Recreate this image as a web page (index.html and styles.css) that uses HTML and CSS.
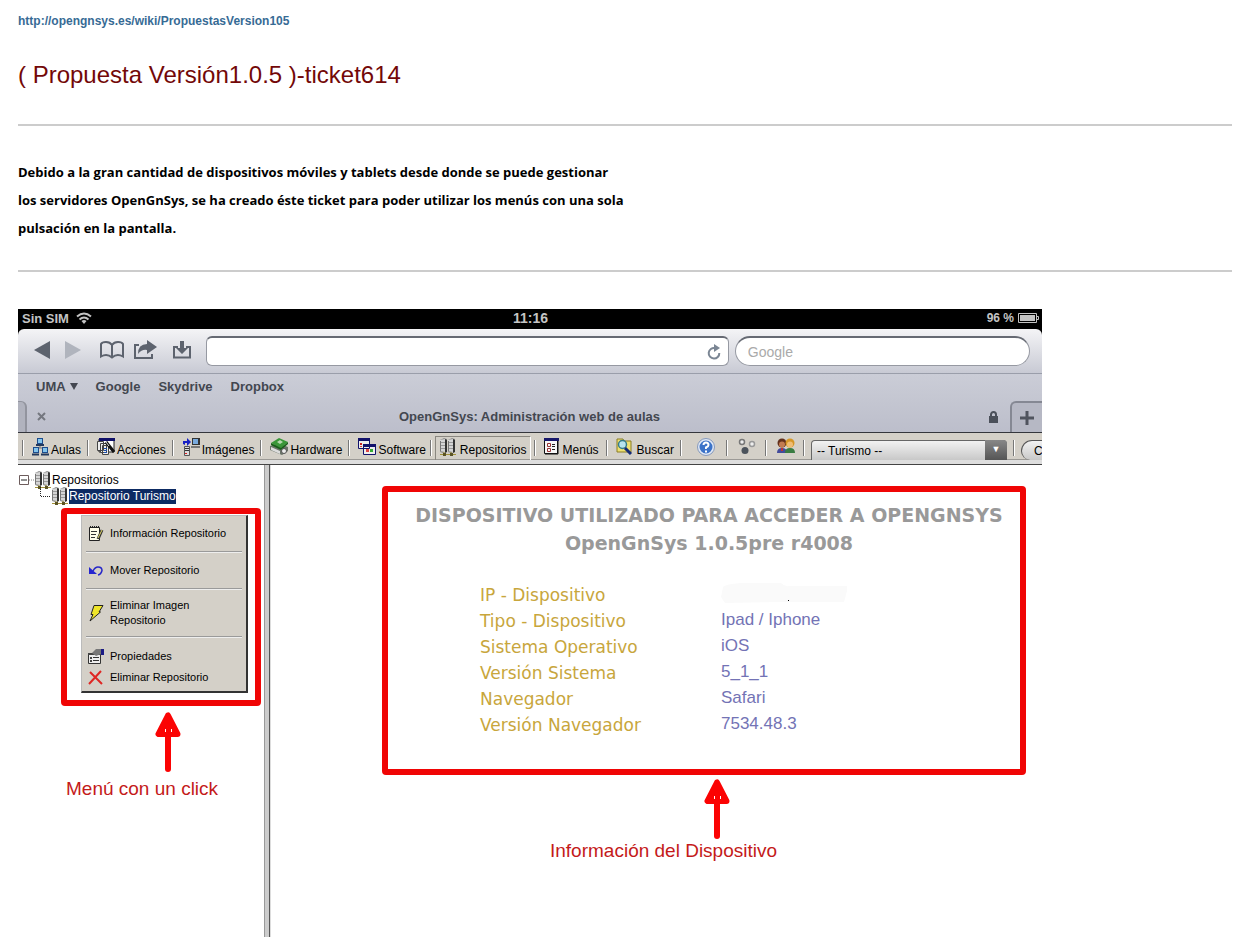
FILE: index.html
```
<!DOCTYPE html>
<html lang="es">
<head>
<meta charset="utf-8">
<title>Propuesta Versión1.0.5 - ticket614</title>
<link rel="stylesheet" href="styles.css">
</head>
<body>
<svg width="0" height="0" class="defs" aria-hidden="true">
  <defs>
    <symbol id="servers" viewBox="0 0 18 18">
      <path d="M1 2l4-2 3 1v12l-4 2-3-1z" fill="#8d8d8d"/><path d="M1 2l5-1v13l-5-1z" fill="#d5d5d5"/><path d="M6 1l2 1v12l-2 1z" fill="#333"/>
      <path d="M9 2l4-2 3 1v12l-4 2-3-1z" fill="#8d8d8d"/><path d="M9 2l5-1v13l-5-1z" fill="#d5d5d5"/><path d="M14 1l2 1v12l-2 1z" fill="#333"/>
      <path d="M1.500 3v10M9.500 3v10" stroke="#777"/><path d="M2 4.500h4M2 7.500h4M2 10.500h4M10 4.500h4M10 7.500h4M10 10.500h4" stroke="#999"/>
      <path d="M1 16.500h16M5 14v3M12 14v3" stroke="#a2923a"/><path d="M4 15h3v3H4zM11 15h3v3h-3z" fill="#5b5426"/>
    </symbol>
    <symbol id="arrow" viewBox="0 0 26 60">
      <path d="M13 57V20" stroke="#fb0303" stroke-width="6" stroke-linecap="round"/>
      <path d="M13 3.500L3.500 22h19z" fill="#fb0303" stroke="#fb0303" stroke-width="6" stroke-linejoin="round"/>
      <path d="M10.500 17v3M16.500 17v3" stroke="#fff"/>
    </symbol>
  </defs>
</svg>
<main class="page">
  <a class="wiki-link" href="#">http://opengnsys.es/wiki/PropuestasVersion105</a>
  <h1 class="title">( Propuesta Versión1.0.5 )-ticket614</h1>
  <hr class="rule">
  <p class="intro">Debido a la gran cantidad de dispositivos móviles y tablets desde donde se puede gestionar<br>los servidores OpenGnSys, se ha creado éste ticket para poder utilizar los menús con una sola<br>pulsación en la pantalla.</p>
  <hr class="rule">

  <section class="device">
    <div class="status">
      <span class="status-left">Sin SIM
        <svg width="16" height="12" viewBox="0 0 16 12" fill="none" stroke="#c4c4c4" stroke-width="2"><path d="M1 4.500Q8-1.500 15 4.500M3.500 7.500Q8 3.500 12.500 7.500"/><path d="M5.500 9Q8 7 10.500 9L8 12z" fill="#c4c4c4" stroke="none"/></svg>
      </span>
      <span class="clock">11:16</span>
      <span class="status-right">96 %
        <svg width="21" height="10" viewBox="0 0 21 10"><path d="M.5.5h18v9H.5zM19 3.500h1.500v3H19" fill="none" stroke="#c4c4c4"/><path d="M2 2h15v6H2z" fill="#c4c4c4"/></svg>
      </span>
    </div>
    <div class="safari">
      <div class="nav">
        <div class="nav-icons">
          <button class="icon-btn" aria-label="Atrás"><svg width="16" height="18" viewBox="0 0 16 18"><path d="M0 9L16 0v18z" fill="#5d636e"/></svg></button>
          <button class="icon-btn" aria-label="Adelante"><svg width="16" height="18" viewBox="0 0 16 18"><path d="M16 9L0 0v18z" fill="#b0b4bd"/></svg></button>
          <button class="icon-btn book" aria-label="Marcadores"><svg width="26" height="18" viewBox="0 0 26 18" fill="none" stroke="#5d636e" stroke-width="2"><path d="M13 4Q11 1 7 1 3 1 2 3V15.500Q8 12 13 16.500 18 12 24 15.500V3Q23 1 19 1 15 1 13 4zV16"/></svg></button>
          <button class="icon-btn" aria-label="Compartir"><svg width="24" height="20" viewBox="0 0 24 20"><path d="M6 5H2v13h17v-4" fill="none" stroke="#5d636e" stroke-width="2"/><path d="M5 14Q5 4 14 4V0l10 7-10 7v-4Q9 9 5 14z" fill="#5d636e"/></svg></button>
          <button class="icon-btn save" aria-label="Guardar"><svg width="20" height="18" viewBox="0 0 20 18"><path d="M6 6H2v10.500h16V6h-4" fill="none" stroke="#5d636e" stroke-width="2"/><path d="M8 0h4v7h4l-6 6-6-6h4z" fill="#5d636e"/></svg></button>
        </div>
        <div class="address">
          <input type="text" aria-label="Dirección">
          <button class="icon-btn" aria-label="Recargar"><svg width="14" height="16" viewBox="0 0 14 16"><path d="M8 4A5.300 5.300 0 1 0 12.300 9" fill="none" stroke="#7b8694" stroke-width="2"/><path d="M7 0l6 4-6 4z" fill="#7b8694"/></svg></button>
        </div>
        <input class="search" type="text" placeholder="Google" aria-label="Google">
      </div>
      <nav class="bookmarks"><a href="#">UMA <svg width="8" height="7" viewBox="0 0 8 7"><path d="M0 0h8L4 7z" fill="#434750"/></svg></a><a href="#">Google</a><a href="#">Skydrive</a><a href="#">Dropbox</a></nav>
      <div class="tabs">
        <span class="tab-edge"></span>
        <button class="icon-btn tab-close" aria-label="Cerrar"><svg width="9" height="9" viewBox="0 0 9 9"><path d="M1 1l7 7M8 1L1 8" stroke="#74777f" stroke-width="2"/></svg></button>
        <span class="tab-title">OpenGnSys: Administración web de aulas</span>
        <svg width="9" height="12" viewBox="0 0 9 12"><path d="M0 5h9v7H0z" fill="#4b505a"/><path d="M2 5V3.500a2.500 2.500 0 0 1 5 0V5" fill="none" stroke="#4b505a" stroke-width="2"/></svg>
        <button class="tab-new" aria-label="Nueva"><svg width="14" height="14" viewBox="0 0 14 14"><path d="M7 0v14M0 7h14" stroke="#50545e" stroke-width="3"/></svg></button>
      </div>
    </div>

    <div class="toolbar">
      <button class="tool"><svg width="17" height="18" viewBox="0 0 17 18"><path d="M8 6v4M4 13v-3h9v3" fill="none" stroke="#777"/><path d="M5 0h6v6H5zM1 9h6v6H1zM10 9h6v6h-6z" fill="#1d4c8c"/><path d="M6 1h4v4H6zM2 10h4v4H2zM11 10h4v4h-4z" fill="#83c5ed"/><path d="M4 7h8M0 16.500h7M9 16.500h8" stroke="#23395c" stroke-width="2"/></svg>Aulas</button>
      <button class="tool"><svg width="18" height="18" viewBox="0 0 18 18"><path d="M2 1h15v13H2z" fill="#fff" stroke="#222"/><path d="M2 0h16v3H2z" fill="#101068"/><path d="M.5 3.500h6v9h-6zM3.500 5.500h6v9h-6zM5.500 7.500h6v9h-6z" fill="#eee" stroke="#444"/><path d="M7 10.500h3M7 12.500h3M7 14.500h3" stroke="#1c50b0"/><path d="M9 4l8 10" stroke="#111" stroke-width="3"/><path d="M9 4l3 4" stroke="#ddd"/></svg>Acciones</button>
      <button class="tool"><svg width="18" height="18" viewBox="0 0 18 18"><path d="M1 6V3h4V0l4 4-4 4V5H3v2z" fill="#1720c4"/><path d="M10 0h8v7h-8z" fill="#333"/><path d="M11 1h5v5h-5z" fill="#79aadd"/><path d="M9 8h9v2H9z" fill="#777"/><path d="M2.500 8.500h5v9h-5z" fill="#ddd" stroke="#555"/><path d="M3 10.500h4M3 12.500h4" stroke="#333"/><path d="M3 15h2v1H3z" fill="#d22"/></svg>Imágenes</button>
      <button class="tool"><svg width="18" height="18" viewBox="0 0 18 18"><path d="M0 8l8-3 10 4v4l-6 4L0 12z" fill="#6a7468"/><path d="M1 9l9 4v3L1 12z" fill="#ddd"/><path d="M1 5l8-5 9 4-7 6z" fill="#3a9738"/><path d="M1 5v2l10 5 7-6V4l-7 6z" fill="#176018"/><path d="M7 4l3-2 3 2-3 2z" fill="#b8d8b0"/><circle cx="14" cy="13" r="2.500" fill="#eee" stroke="#555"/></svg>Hardware</button>
      <button class="tool"><svg width="18" height="18" viewBox="0 0 18 18"><path d="M.5.5h11v10H.5zM5.500 6.500h12v10h-12z" fill="#eee" stroke="#12126b"/><path d="M0 0h12v3H0zM5 6h13v3H5z" fill="#12126b"/><path d="M2 5h2v2H2z" fill="#c22"/><path d="M2 8h2v1H2zM8 11h3v3H8z" fill="#d44"/><path d="M12 11h3v3h-3z" fill="#3a3"/></svg>Software</button>
      <button class="tool selected"><svg width="18" height="18"><use href="#servers"/></svg>Repositorios</button>
      <button class="tool menus"><svg width="15" height="17" viewBox="0 0 15 17"><path d="M.5.5h13v15H.5z" fill="#f7f7f7" stroke="#111"/><path d="M14 1v15H1" fill="none" stroke="#111"/><path d="M0 0h15v3H0z" fill="#17176a"/><path d="M3.500 5.500h3v3h-3zM3.500 10.500h3v3h-3z" fill="none" stroke="#933"/><path d="M8 6.500h3M8 8.500h3M8 11.500h3" stroke="#222"/></svg>Menús</button>
      <button class="tool wide"><svg width="17" height="18" viewBox="0 0 17 18"><path d="M1 1h6l1 2h7v11H1z" fill="#eee070" stroke="#8a7d24"/><circle cx="6.500" cy="6.500" r="4" fill="#b7e4ee" stroke="#357c87" stroke-width="1.500"/><path d="M9 10l6 6" stroke="#152a75" stroke-width="3"/></svg>Buscar</button>
      <button class="tool solo" aria-label="Ayuda"><svg width="18" height="18" viewBox="0 0 18 18"><circle cx="9" cy="9" r="7.500" fill="#3c73c8" stroke="#e0e8f5" stroke-width="2"/><circle cx="9" cy="9" r="8.500" fill="none" stroke="#8498bb"/><path d="M6.500 7Q6.500 4.500 9 4.500T11.500 7Q11.500 8.500 9 9.500V11" fill="none" stroke="#fff" stroke-width="2"/><path d="M8 12.500h2v2H8z" fill="#fff"/></svg></button>
      <button class="tool solo nodes" aria-label="Estado"><svg width="18" height="18" viewBox="0 0 18 18"><circle cx="4" cy="4" r="2.500" fill="#eee" stroke="#777" stroke-width="1.500"/><circle cx="14" cy="6" r="2.500" fill="#eee" stroke="#999" stroke-width="1.500"/><circle cx="7" cy="12.500" r="3.500" fill="#4c535c"/></svg></button>
      <button class="tool solo users" aria-label="Usuarios"><svg width="18" height="18" viewBox="0 0 18 18"><circle cx="5" cy="5" r="4.500" fill="#62301c"/><circle cx="13" cy="5" r="4.500" fill="#d69727"/><circle cx="5" cy="6.500" r="3" fill="#c27b51"/><circle cx="13" cy="6.500" r="3" fill="#efbd75"/><path d="M0 15q0-5 5-5t5 5z" fill="#434b9b"/><path d="M8 15q0-5 5-5t5 5z" fill="#397c42"/><path d="M4 10h2v3H4z" fill="#b33"/></svg></button>
      <div class="select-wrap"><select aria-label="Centro"><option>-- Turismo --</option></select></div>
      <div class="cut"><button class="pill">C</button></div>
    </div>

    <div class="panes">
      <aside class="side">
        <div class="tree">
          <div class="node"><svg width="16" height="18" viewBox="0 0 16 18"><path d="M1.500 4.500h9v9h-9z" fill="#fff" stroke="#6d5c5c"/><path d="M3 9h6" stroke="#222"/><path d="M11 9h5" stroke="#888" stroke-dasharray="1 1"/></svg><svg width="18" height="18"><use href="#servers"/></svg><span>Repositorios</span></div>
          <div class="node child"><svg width="11" height="18" viewBox="0 0 11 18"><path d="M.5 0v9.500H11" fill="none" stroke="#222" stroke-dasharray="1 1"/></svg><svg width="18" height="18"><use href="#servers"/></svg><span class="active">Repositorio Turismo</span></div>
        </div>
        <div class="mark menu-mark">
          <div class="menu">
            <button class="item"><svg width="16" height="16" viewBox="0 0 16 16"><path d="M1.500 1.500h10v13h-10z" fill="#fffde8" stroke="#222"/><path d="M2 1h9" stroke="#222" stroke-width="2" stroke-dasharray="1 1"/><path d="M3 5.500h6M3 8.500h5M3 11.500h4" stroke="#333"/><path d="M14 4l-4 9" stroke="#333" stroke-width="3"/><path d="M14 4l-4 8" stroke="#e3d969"/></svg>Información Repositorio</button>
            <button class="item"><svg width="16" height="16" viewBox="0 0 16 16"><path d="M5 8Q7 4 10 4q4 0 4 3.500-1 4-4 4.500" fill="none" stroke="#2727c8" stroke-width="1.500"/><path d="M1 4v7h8z" fill="#2525d0"/></svg>Mover Repositorio</button>
            <button class="item two"><svg width="16" height="18" viewBox="0 0 16 18"><path d="M6 1.500h9L11 8h1.500L2 17l3-6.500H3z" fill="#efe52b" stroke="#222"/></svg><span>Eliminar Imagen<br>Repositorio</span></button>
            <button class="item tight"><svg width="16" height="16" viewBox="0 0 16 16"><path d="M.5 4.500h12v10H.5z" fill="#eee" stroke="#333"/><path d="M0 4h13v2H0z" fill="#444"/><path d="M2 8h2v2H2zM2 11h2v2H2z" fill="#444"/><path d="M5 8.500h6M5 11.500h6" stroke="#333"/><path d="M4 4l4-4h5v5l-5 2z" fill="#777"/><path d="M13 0h3v6h-3z" fill="#1c1c86"/></svg>Propiedades</button>
            <button class="item tight"><svg width="16" height="16" viewBox="0 0 16 16"><path d="M2 2l12 12M13 1L1 14" stroke="#df2724" stroke-width="2"/></svg>Eliminar Repositorio</button>
          </div>
        </div>
        <div class="note"><svg width="26" height="60"><use href="#arrow"/></svg><p>Menú con un click</p></div>
      </aside>
      <div class="divider"></div>
      <section class="content">
        <div class="mark info">
          <h2>DISPOSITIVO UTILIZADO PARA ACCEDER A OPENGNSYS<br>OpenGnSys 1.0.5pre r4008</h2>
          <table>
            <tr><th scope="row">IP - Dispositivo</th><td><svg width="128" height="22" viewBox="0 0 128 22"><path d="M2 5Q4 2 20 1h40q4 4 8 3h58v5l-3 11H60L4 21l-4-6z" fill="#fafafa"/><path d="M67 18h1v1h-1z" fill="#000"/></svg></td></tr>
            <tr><th scope="row">Tipo - Dispositivo</th><td>Ipad / Iphone</td></tr>
            <tr><th scope="row">Sistema Operativo</th><td>iOS</td></tr>
            <tr><th scope="row">Versión Sistema</th><td>5_1_1</td></tr>
            <tr><th scope="row">Navegador</th><td>Safari</td></tr>
            <tr><th scope="row">Versión Navegador</th><td>7534.48.3</td></tr>
          </table>
        </div>
        <div class="note info-note"><svg width="26" height="60"><use href="#arrow"/></svg><p>Información del Dispositivo</p></div>
      </section>
    </div>
  </section>
</main>
</body>
</html>
```

FILE: styles.css
```
* { box-sizing: border-box; }
body { margin: 0; background: #fff; font-family: "Liberation Sans", Arial, sans-serif; }
button, input, select { font: inherit; margin: 0; }
svg { flex: none; display: block; }
.defs { position: absolute; }

.page { display: flex; flex-direction: column; min-height: 100vh; padding: 12px 18px 0; }
.wiki-link { align-self: flex-start; font-size: 12px; line-height: 18px; font-weight: bold; color: #376b95; text-decoration: none; }
.title { margin: 28px 0 32px; font-size: 24px; line-height: 34px; font-weight: normal; color: #730808; }
.rule { width: 100%; height: 2px; margin: 0; border: 0; background: #ccc; }
.intro { margin: 32px 0 28px; font-family: "Open Sans", sans-serif; font-size: 13px; line-height: 28px; font-weight: bold; color: #000; }

.device { display: flex; flex-direction: column; flex: 1; width: 100%; max-width: 1024px; margin-top: 37px; }
.status { display: grid; grid-template-columns: 1fr auto 1fr; align-items: center; height: 20px; padding: 0 3px 2px 4px; background: #000; color: #c4c4c4; font-size: 13px; font-weight: bold; }
.status-left, .status-right { display: flex; align-items: center; gap: 7px; }
.status-right { justify-content: flex-end; gap: 4px; font-size: 12px; }
.clock { font-size: 14px; }

.safari { background: #000; }
.nav { display: flex; align-items: center; gap: 6px; height: 45px; padding: 0 12px 0 16px; border-bottom: 1px solid #9a9eaa; border-radius: 6px 6px 0 0; background: linear-gradient(#f4f4f6, #c8cad4); }
.nav-icons { display: flex; align-items: center; width: 166px; padding-bottom: 3px; }
.icon-btn { display: flex; padding: 0; border: 0; background: none; }
.nav-icons .icon-btn { margin-right: 15px; }
.nav-icons .book { margin: 0 8px 0 3px; }
.nav-icons .save { margin: 0; }
.address { flex: 21; display: flex; align-items: center; height: 30px; padding-right: 7px; border: 1px solid #9699a2; border-top: 2px solid #666a73; border-radius: 6px; background: #fff; }
.address input { flex: 1; min-width: 0; border: 0; background: none; outline: 0; }
.search { flex: 11; min-width: 0; height: 30px; padding: 0 12px; border: 1px solid #9699a2; border-top: 2px solid #666a73; border-radius: 15px; background: #fff; font-size: 14px; }
.search::placeholder { color: #aaa; opacity: 1; }
.bookmarks { display: flex; align-items: center; gap: 18px; height: 27px; padding: 0 0 2px 18px; background: linear-gradient(#cbcdd7, #c4c6d1); }
.bookmarks a { display: flex; align-items: center; gap: 4px; color: #434750; font-size: 13px; font-weight: bold; text-decoration: none; }
.tabs { display: flex; align-items: center; height: 32px; background: linear-gradient(#c4c6d1, #bcbecb); border-bottom: 1px solid #34363c; }
.tab-edge { align-self: stretch; width: 9px; border: 1px solid #92949e; border-width: 1px 2px 0 0; border-radius: 0 6px 0 0; background: #b1b3be; }
.tab-close { margin-left: 10px; }
.tab-title { flex: 1; padding-left: 24px; text-align: center; font-size: 13px; font-weight: bold; color: #434750; }
.tab-new { display: flex; align-items: center; justify-content: center; align-self: stretch; width: 32px; margin-left: 12px; padding: 0; border: 1px solid #858893; border-width: 2px 0 0 2px; border-radius: 6px 0 0 0; background: #b6b8c4; }

.toolbar { display: flex; align-items: flex-start; height: 32px; padding: 3px 0 0 4px; overflow: hidden; border-bottom: 1px solid #444; background: linear-gradient(#d4d0c8 0 26px, #9c9a96 26px 27px, #dedede 27px); }
.tool { position: relative; display: flex; align-items: flex-start; gap: 2px; height: 24px; padding: 2px 6px 0 10px; border: 0; background: none; color: #000; font-size: 12px; line-height: 24px; white-space: nowrap; }
.tool::before, .select-wrap::before, .cut::before { content: ""; position: absolute; left: 0; top: 4px; width: 2px; height: 16px; background: linear-gradient(90deg, #777 50%, #fff 50%); }
.selected { margin: 0 3px; padding: 1px 3px 0 3px; border: 1px solid #8a8780; border-right-color: #fff; border-bottom: 0; gap: 3px; }
.selected::before { left: -6px; top: 3px; }
.menus { gap: 4px; padding-right: 7px; }
.wide { gap: 4px; }
.solo { padding: 2px 11px 0 17px; }
.nodes { padding-left: 12px; padding-right: 9px; }
.users { padding-left: 12px; padding-right: 8px; }
.select-wrap { position: relative; flex: 1; padding: 4px 6px 0 8px; }
.select-wrap::after { content: "▼"; position: absolute; right: 6px; top: 4px; width: 22px; height: 20px; border-radius: 0 4px 0 0; background: linear-gradient(#888, #555); color: #fff; font-size: 9px; line-height: 19px; text-align: center; pointer-events: none; }
.select-wrap select { appearance: none; display: block; width: 100%; height: 20px; padding: 0 5px; border: 1px solid #666; border-bottom: 0; border-radius: 4px 4px 0 0; background: linear-gradient(#f2f2f2, #c8c8c8); color: #000; font-size: 12px; }
.cut { position: relative; flex: none; width: 29px; padding: 4px 0 0 8px; overflow: hidden; }
.pill { display: block; width: 60px; height: 20px; padding: 0 0 0 12px; border: 1px solid #555; border-bottom: 0; border-radius: 12px 0 0 10px; background: linear-gradient(#f2f2f2, #c8c8c8); color: #000; font-size: 12px; text-align: left; }

.panes { display: flex; flex: 1; }
.side { flex: none; width: 246px; padding-top: 7px; }
.divider { flex: none; width: 7px; background: linear-gradient(90deg, #999 0 1px, #ccc 1px 5px, #555 5px 6px, #ddd 6px); }
.content { flex: 1; padding: 21px 16px 0 111px; }
.tree { font-size: 12px; line-height: 16px; color: #000; }
.node { display: flex; align-items: center; height: 16px; }
.child { padding-left: 22px; }
.node .active { background: #0d2b63; color: #fff; line-height: 15px; }
.mark { border: 6px solid #f00505; border-radius: 4px; }
.menu-mark { width: 200px; margin: 4px 0 0 43px; padding: 1px 7px 7px 14px; }
.menu { display: flex; flex-direction: column; padding: 0 4px 3px; border: 1px solid #bbb; border-width: 1px 2px 2px 1px; border-right-color: #333; border-bottom-color: #333; background: #d4d0c8; }
.item { display: flex; align-items: center; gap: 6px; height: 37px; padding: 0 2px; border: 0; border-bottom: 2px groove #eee; background: none; color: #000; font-size: 11px; line-height: 15px; text-align: left; white-space: nowrap; }
.item.two { height: 48px; }
.item.tight { height: 21px; border: 0; }
.two + .tight { margin-top: 8px; }
.note { display: flex; flex-direction: column; align-items: flex-start; padding: 6px 0 0 48px; }
.note svg { margin-left: 89px; }
.note p { margin: 5px 0 0; font-size: 19px; line-height: 24px; color: #c41a1a; white-space: nowrap; }
.info-note { padding: 4px 0 0 168px; }
.info-note svg { margin-left: 154px; }
.info-note p { margin-top: 0; }

.info { height: 289px; padding: 9px 0 0; }
.info h2 { margin: 0; padding-left: 10px; font-family: "DejaVu Sans", Verdana, sans-serif; font-size: 19px; line-height: 28px; font-weight: bold; color: #999; text-align: center; white-space: nowrap; }
.info table { margin: 25px 0 0 92px; border-collapse: collapse; }
.info tr { height: 26px; }
.info th { width: 241px; padding: 0; font-family: "DejaVu Sans", Verdana, sans-serif; font-size: 17px; line-height: 26px; font-weight: normal; text-align: left; color: #c8a63c; }
.info td { padding: 0; font-size: 17px; line-height: 24px; color: #7373b5; vertical-align: top; }
```
